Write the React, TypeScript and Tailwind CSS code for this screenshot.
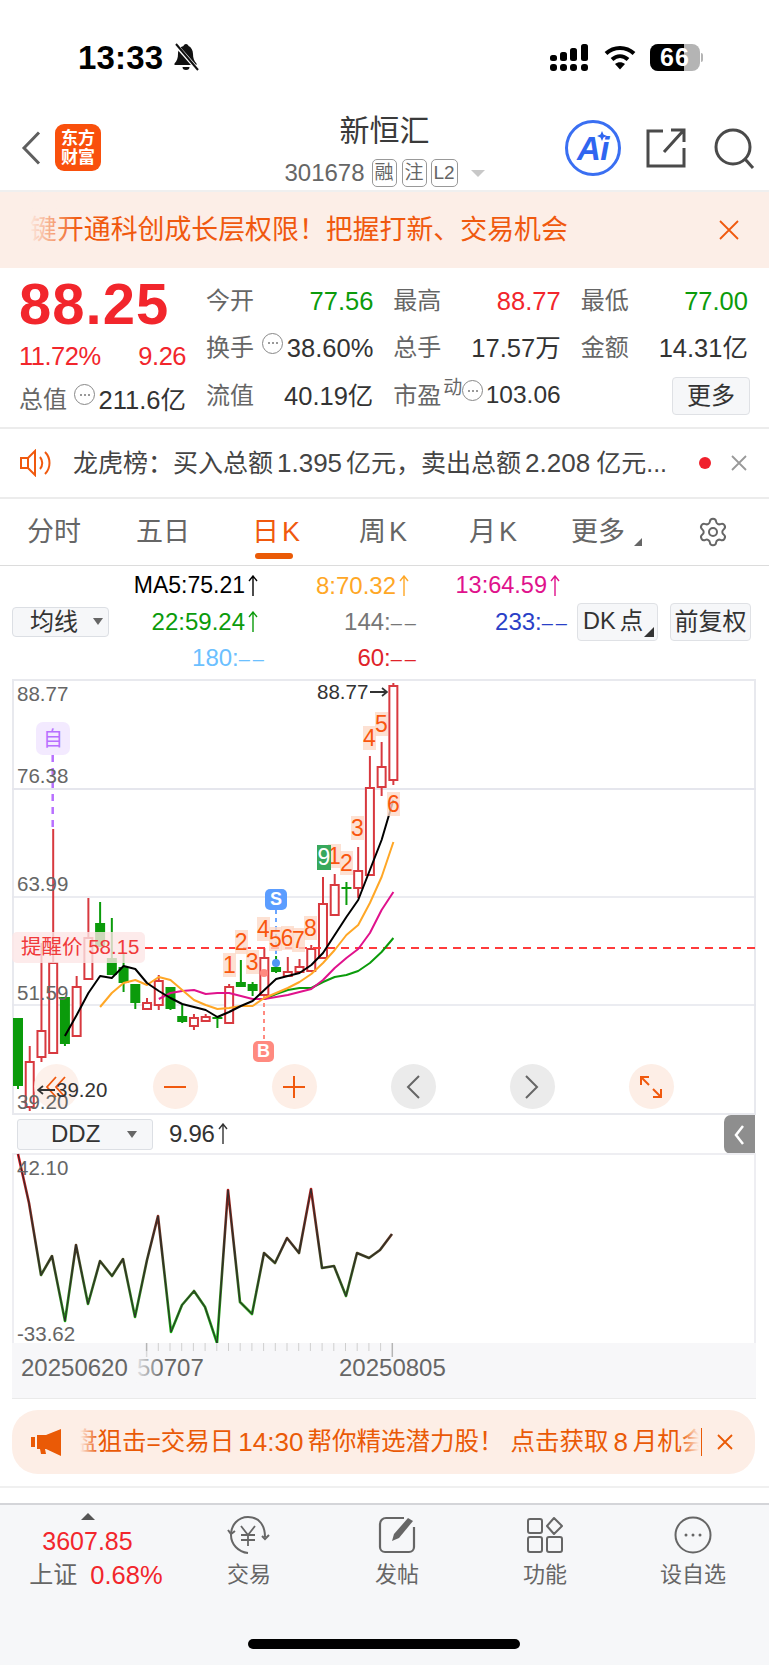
import { Settings } from 'lucide-react';

const RED = '#f2262c';
const GREEN = '#0b9b0b';

// [high, bodyTop, bodyBottom, low, colour]
const candles: [number, number, number, number, 'r' | 'g'][] = [
  [1018, 1018, 1086, 1089, 'g'],
  [1046, 1062, 1107, 1111, 'r'],
  [943, 1031, 1057, 1062, 'r'],
  [829, 963, 1053, 1053, 'r'],
  [997, 997, 1044, 1046, 'g'],
  [976, 987, 1036, 1036, 'r'],
  [898, 938, 979, 979, 'r'],
  [902, 923, 947, 947, 'g'],
  [918, 958, 975, 975, 'g'],
  [952, 967, 983, 992, 'g'],
  [984, 984, 1003, 1009, 'g'],
  [998, 1003, 1009, 1009, 'r'],
  [975, 981, 1005, 1010, 'r'],
  [987, 987, 1009, 1010, 'g'],
  [1005, 1016, 1022, 1023, 'g'],
  [1014, 1018, 1026, 1030, 'r'],
  [1014, 1017, 1021, 1022, 'r'],
  [1017, 1017, 1019, 1028, 'g'],
  [984, 987, 1023, 1023, 'r'],
  [960, 982, 987, 987, 'g'],
  [982, 984, 991, 996, 'g'],
  [948, 958, 995, 995, 'r'],
  [956, 967, 972, 973, 'g'],
  [957, 972, 976, 976, 'r'],
  [959, 967, 972, 972, 'r'],
  [945, 949, 971, 971, 'r'],
  [877, 904, 958, 958, 'r'],
  [874, 885, 915, 915, 'r'],
  [882, 887, 889, 905, 'g'],
  [847, 871, 888, 898, 'r'],
  [756, 788, 875, 875, 'r'],
  [742, 767, 787, 796, 'r'],
  [683, 686, 780, 785, 'r'],
];

const cx = (i: number) => 18 + i * 11.73;

const ma5 = [1036, 1015, 993, 976, 978, 966, 969, 983, 991, 998, 1004, 1007, 1010, 1017, 1012, 1006, 1001, 990, 979, 976, 973, 965, 953, 935, 917, 900, 870, 840, 800];
const ma8 = [1007, 993, 983, 980, 985, 977, 980, 990, 1000, 1005, 1009, 1008, 1006, 1006, 998, 993, 988, 982, 974, 963, 950, 935, 925, 903, 877, 842];
const ma13 = [999, 993, 991, 990, 994, 993, 993, 996, 999, 999, 997, 995, 992, 989, 980, 968, 958, 949, 933, 910, 892];
const ma22 = [999, 994, 990, 988, 988, 982, 977, 975, 971, 963, 952, 938];

const line = (ys: number[], start: number) => ys.map((y, i) => `${cx(start + i).toFixed(1)},${y}`).join(' ');

const tdMarks: [string, number, number][] = [
  ['1', 230, 965],
  ['2', 241.7, 942],
  ['3', 252.7, 962],
  ['4', 264, 929],
  ['5', 276, 939],
  ['6', 287.7, 938],
  ['7', 299, 940],
  ['8', 311, 928],
  ['1', 335, 856],
  ['2', 347, 863],
  ['3', 358, 828],
  ['4', 370, 738],
  ['5', 382, 724],
  ['6', 394, 804],
];

const ddz = [
  [18, 1154], [29, 1203], [41, 1275], [52, 1256], [65, 1321], [76, 1245], [88, 1304], [100, 1261], [112, 1276], [123, 1259],
  [135, 1317], [147, 1260], [158, 1216], [171, 1332], [182, 1305], [194, 1291], [205, 1307], [217, 1343], [228, 1190], [240, 1302],
  [252, 1314], [264, 1253], [275, 1263], [287, 1238], [299, 1253], [311, 1189], [322, 1268], [334, 1266], [346, 1296], [357, 1253],
  [369, 1258], [380, 1250], [392, 1234],
];

function UpArrow({ color }: { color: string }) {
  return (
    <svg width="10" height="22" viewBox="0 0 10 22" fill="none" stroke={color} strokeWidth="1.4" className="ml-[3px] shrink-0">
      <path d="M5 1v20M1 6l4-5 4 5" />
    </svg>
  );
}

function Dots() {
  return (
    <span className="inline-flex w-[21px] h-[21px] rounded-full border border-[#888] items-center justify-center gap-[2px] shrink-0">
      <i className="w-[2px] h-[2px] rounded-full bg-[#777]" />
      <i className="w-[2px] h-[2px] rounded-full bg-[#777]" />
      <i className="w-[2px] h-[2px] rounded-full bg-[#777]" />
    </span>
  );
}

function Stat({ label, value, color, dots }: { label: string; value: string; color: string; dots?: boolean }) {
  return (
    <div className="h-[47.500px] flex items-center justify-between">
      <div className="flex items-center">
        <span className="text-[24px] text-[#666]">{label}</span>
        {dots && (
          <span className="ml-[8px] mb-[10px] flex">
            <Dots />
          </span>
        )}
      </div>
      <span className="text-[25.500px]" style={{ color }}>
        {value}
      </span>
    </div>
  );
}

function StatusBar() {
  return (
    <div className="h-[112px] pt-[43px] pl-[78px] pr-[66px] flex items-start justify-between">
      <div className="flex items-center h-[28px]">
        <span className="text-[33px] font-semibold text-black leading-none tracking-[0.2px]">13:33</span>
        <svg width="27" height="28" viewBox="0 0 27 28" className="ml-[10px]">
          <path d="M13 1c-1.500 0-2.300 1-2.500 2-3.500 1-5.500 4-5.500 8 0 4-1 7-3.500 9.500v1.500h22V20.500C21 18 20 15 20 11c0-4-2-7-4.500-8C15.300 2 14.500 1 13 1z" fill="#111" />
          <path d="M9.500 24a3.500 3 0 0 0 7 0z" fill="#111" />
          <path d="M2 1l23 26" stroke="#fff" strokeWidth="4" />
          <path d="M3 1l22 26" stroke="#111" strokeWidth="2" />
        </svg>
      </div>
      <div className="flex items-center h-[28px]">
        <svg width="38" height="27" viewBox="0 0 38 27" fill="#000">
          <rect x="0" y="11" width="7" height="6" rx="2.500" />
          <rect x="10" y="8" width="7" height="9" rx="2.500" />
          <rect x="20" y="4" width="7" height="13" rx="2.500" />
          <rect x="31" y="0" width="7" height="17" rx="2.500" />
          <rect x="0" y="20" width="7" height="7" rx="3" />
          <rect x="10" y="20" width="7" height="7" rx="3" />
          <rect x="20" y="20" width="7" height="7" rx="3" />
          <rect x="31" y="20" width="7" height="7" rx="3" />
        </svg>
        <svg width="32" height="26" viewBox="0 0 32 26" fill="none" stroke="#000" className="ml-[16px]">
          <path d="M2 9.500c8-7.500 20-7.500 28 0" strokeWidth="4" />
          <path d="M8 15.500c5-4.500 11-4.500 16 0" strokeWidth="4" />
          <path d="M16 25.500l-5-5.500c3-2.500 7-2.500 10 0z" fill="#000" stroke="none" />
        </svg>
        <div className="ml-[14px] flex items-center">
          <div className="relative w-[50px] h-[27px] rounded-[8px] bg-[#b4b4b4] overflow-hidden flex items-center justify-center">
            <div className="absolute left-0 top-0 bottom-0 w-[34px] bg-black" />
            <span className="relative text-[25px] font-bold text-white leading-none tracking-[1px]">66</span>
          </div>
          <div className="ml-[1px] w-[2px] h-[9px] rounded-r-full bg-[#b4b4b4]" />
        </div>
      </div>
    </div>
  );
}

function Header() {
  return (
    <div className="h-[78px] grid grid-cols-[1fr_auto_1fr] items-center">
      <div className="flex items-center pl-[21px] pb-[7px]">
        <svg width="20" height="34" viewBox="0 0 20 34" fill="none" stroke="#5f5f5f" strokeWidth="3">
          <path d="M18 1.500L3 17l15 15.500" />
        </svg>
        <div className="ml-[14px] w-[46px] h-[47px] rounded-[9px] bg-[#f9500c] flex flex-col items-center justify-center text-white font-bold text-[17px] leading-[19px]">
          <span>东方</span>
          <span>财富</span>
        </div>
      </div>
      <div className="flex flex-col items-center self-start pt-[3px]">
        <span className="text-[30px] leading-[32px] text-[#3a3a3a]">新恒汇</span>
        <div className="flex items-center mt-[12px] h-[28px]">
          <span className="text-[24px] text-[#666] mr-[7px]">301678</span>
          <span className="w-[25px] h-[28px] rounded-[5px] border border-[#999] text-[#666] text-[19px] flex items-center justify-center">融</span>
          <span className="ml-[5px] w-[25px] h-[28px] rounded-[5px] border border-[#999] text-[#666] text-[19px] flex items-center justify-center">注</span>
          <span className="ml-[4px] w-[27px] h-[28px] rounded-[5px] border border-[#999] text-[#666] text-[19px] flex items-center justify-center">L2</span>
          <span className="ml-[13px] w-0 h-0 border-x-[7px] border-x-transparent border-t-[7px] border-t-[#c8c8c8]" />
        </div>
      </div>
      <div className="flex items-center justify-end pr-[14px] pb-[6px]">
        <div className="relative w-[56px] h-[56px] rounded-full border-[3px] border-[#3a6ff2] flex items-center justify-center">
          <span className="text-[33px] font-bold italic text-[#2f66f0] leading-none tracking-[-0.5px]">Ai</span>
          <svg width="10" height="10" viewBox="0 0 10 10" className="absolute right-[11px] top-[8px]">
            <path d="M5 0l1.500 3.500L10 5 6.500 6.500 5 10 3.500 6.500 0 5l3.500-1.500z" fill="#2f66f0" />
          </svg>
        </div>
        <svg width="40" height="40" viewBox="0 0 40 40" fill="none" stroke="#4a4a4a" strokeWidth="3" className="ml-[25px]">
          <path d="M17 3H2v35h36V20" />
          <path d="M18 24L37 3M25 2h13v12" />
        </svg>
        <svg width="41" height="41" viewBox="0 0 41 41" fill="none" stroke="#4a4a4a" strokeWidth="3" className="ml-[28px]">
          <circle cx="19" cy="19" r="17" />
          <path d="M31 31l8 9" />
        </svg>
      </div>
    </div>
  );
}

function TopBanner() {
  return (
    <div className="h-[78px] bg-[#fceee7] border-t-2 border-[#efefef] flex items-center relative">
      <span className="ml-[30px] text-[26.900px] leading-none text-[#f0590e] whitespace-nowrap">键开通科创成长层权限！把握打新、交易机会</span>
      <div className="absolute left-[28px] top-0 bottom-0 w-[50px] bg-linear-to-r from-[#fceee7] to-transparent" />
      <svg width="20" height="20" viewBox="0 0 20 20" fill="none" stroke="#f0590e" strokeWidth="1.800" className="ml-auto mr-[30px]">
        <path d="M1 1l18 18M19 1L1 19" />
      </svg>
    </div>
  );
}

function Quote() {
  return (
    <div className="h-[150px] flex pt-[9px] pl-[19px] border-b-2 border-[#ececec] box-content">
      <div className="w-[187px]">
        <div className="h-[53px] flex items-center">
          <span className="text-[58px] font-bold leading-none tracking-[1px]" style={{ color: RED }}>88.25</span>
        </div>
        <div className="h-[46px] pt-[11px] flex justify-between pr-[20px] text-[25.500px] leading-[30px] tracking-[-0.5px]" style={{ color: RED }}>
          <span>11.72%</span>
          <span>9.26</span>
        </div>
        <div className="h-[47.500px] flex items-center justify-between pr-[20px]">
          <div className="flex items-center">
            <span className="text-[24px] text-[#666]">总值</span>
            <span className="ml-[7px] mb-[10px] flex">
              <Dots />
            </span>
          </div>
          <span className="text-[25.500px] text-[#333]">211.6亿</span>
        </div>
      </div>
      <div className="w-[542px] grid grid-cols-3 gap-x-[20px] content-start">
        <Stat label="今开" value="77.56" color={GREEN} />
        <Stat label="最高" value="88.77" color={RED} />
        <Stat label="最低" value="77.00" color={GREEN} />
        <Stat label="换手" value="38.60%" color="#333" dots />
        <Stat label="总手" value="17.57万" color="#333" />
        <Stat label="金额" value="14.31亿" color="#333" />
        <Stat label="流值" value="40.19亿" color="#333" />
        <div className="h-[47.500px] flex items-center justify-between whitespace-nowrap">
          <div className="flex items-center shrink-0">
            <span className="text-[24px] text-[#666]">市盈</span>
            <span className="text-[19px] text-[#666] mb-[16px] ml-[2px]">动</span>
            <span className="mb-[10px] flex">
              <Dots />
            </span>
          </div>
          <span className="text-[24.500px] text-[#333]">103.06</span>
        </div>
        <div className="h-[47.500px] flex items-center justify-end">
          <span className="w-[78px] h-[38px] -mr-[2px] rounded-[4px] bg-[#f6f7f9] border border-[#dfe1e5] flex items-center justify-center text-[24px] text-[#333]">更多</span>
        </div>
      </div>
    </div>
  );
}

function Notice() {
  return (
    <div className="h-[68px] flex items-center pl-[20px] border-b-2 border-[#ececec] box-content">
      <svg width="32" height="28" viewBox="0 0 32 28" fill="none" stroke="#f0590e" strokeWidth="2">
        <path d="M8 9H1v10h7l7 7V2z" />
        <path d="M8 9v10" />
        <path d="M20 8c3 3.500 3 8.500 0 12" />
        <path d="M25 3c6 6 6 16 0 22" />
      </svg>
      <span className="ml-[21px] text-[25px] leading-none text-[#444] whitespace-nowrap flex items-center">
        龙虎榜：买入总额<span className="mx-[4px] text-[26px]">1.395</span>亿元，卖出总额<span className="mx-[4px] text-[26px]">2.208</span><span className="ml-[2px]">亿元...</span>
      </span>
      <span className="absolute left-[699px] w-[12px] h-[12px] rounded-full bg-[#f0202c]" />
      <svg width="16" height="16" viewBox="0 0 16 16" fill="none" stroke="#999" strokeWidth="1.800" className="absolute left-[731px]">
        <path d="M1 1l14 14M15 1L1 15" />
      </svg>
    </div>
  );
}

function Tabs() {
  return (
    <div className="relative h-[66px] border-b border-[#dcdcdc] box-content flex items-center text-[27px] text-[#666]">
      <span className="ml-[27px]">分时</span>
      <span className="ml-[55px]">五日</span>
      <span className="ml-[62px] text-[#f0590e] relative">
        日<span className="ml-[3px]">K</span>
        <span className="absolute left-[3px] -bottom-[7px] w-[38px] h-[6px] rounded-full bg-[#ea5a06]" />
      </span>
      <span className="ml-[59px]">周<span className="ml-[3px]">K</span></span>
      <span className="ml-[62px]">月<span className="ml-[3px]">K</span></span>
      <span className="ml-[54px]">更多</span>
      <span className="ml-[9px] mt-[20px] w-0 h-0 border-l-[8px] border-l-transparent border-b-[8px] border-b-[#666]" />
      <Settings className="ml-[55px]" size={32} strokeWidth={1.5} color="#666" />
    </div>
  );
}

function Caret({ className }: { className: string }) {
  return <span className={`w-0 h-0 border-x-[5px] border-x-transparent border-t-[7px] border-t-[#666] ${className}`} />;
}

function Dash() {
  return <span className="text-[20px] tracking-[3px] -mr-[3px]">––</span>;
}

function MaRows() {
  return (
    <div className="h-[113px] text-[24px] leading-none">
      <div className="h-[37px] pt-[2px] flex items-center">
        <span className="w-[258px] flex justify-end items-center text-black text-[23px]">MA5:75.21<UpArrow color="#000" /></span>
        <span className="w-[151px] flex justify-end items-center text-[#ffa726]">8:70.32<UpArrow color="#ffa726" /></span>
        <span className="w-[151px] flex justify-end items-center text-[#e0128c] text-[23.500px]">13:64.59<UpArrow color="#e0128c" /></span>
      </div>
      <div className="h-[37px] flex items-center">
        <div className="w-[258px] flex items-center justify-between">
          <div className="ml-[12px] w-[97px] h-[30px] rounded-[4px] bg-[#f6f7f9] border border-[#dcdfe4] flex items-center pl-[17px] text-[#333]">
            <span>均线</span>
            <Caret className="ml-[15px]" />
          </div>
          <span className="flex items-center" style={{ color: GREEN }}>22:59.24<UpArrow color={GREEN} /></span>
        </div>
        <span className="w-[158px] text-right text-[#777]">144:<Dash /></span>
        <span className="w-[151px] text-right text-[#2a3fc7]">233:<Dash /></span>
        <div className="relative ml-[10px] w-[81px] h-[38px] rounded-[4px] bg-[#f6f7f9] border border-[#dfe1e5] flex items-center pl-[5px] text-[#333] whitespace-nowrap text-[23.500px]">
          DK<span className="ml-[4px]">点</span>
          <span className="absolute right-[3px] bottom-[3px] w-0 h-0 border-l-[10px] border-l-transparent border-b-[10px] border-b-[#333]" />
        </div>
        <div className="ml-[12px] w-[81px] h-[38px] rounded-[4px] bg-[#f6f7f9] border border-[#dfe1e5] flex items-center justify-center text-[#333] whitespace-nowrap">前复权</div>
      </div>
      <div className="h-[35px] flex items-center">
        <span className="w-[264px] text-right text-[#6cc0ff]">180:<Dash /></span>
        <span className="w-[152px] text-right text-[#e0232a]">60:<Dash /></span>
      </div>
    </div>
  );
}

function RoundButton({ bg, children }: { bg: string; children: React.ReactNode }) {
  return (
    <div className={`w-[45px] h-[45px] rounded-full flex items-center justify-center ${bg}`}>{children}</div>
  );
}

function MainChart() {
  return (
    <div className="relative mx-[12px] h-[436px] w-[744px] border-2 border-[#e8e9ee] box-border">
      <svg className="absolute -left-[2px] -top-[2px]" width="744" height="436" viewBox="12 679 744 436" fill="none">
        <path d="M12 789H756" stroke="#e5e6ed" strokeWidth="2" />
        <path d="M12 897H756M12 1005H756" stroke="#e5e6ed" strokeWidth="1.500" />
        <path d="M52.700 755V829" stroke="#b870ff" strokeWidth="2.500" strokeDasharray="7 6" />
        <path d="M276 910V960" stroke="#6ba6ff" strokeWidth="2" strokeDasharray="4 4" />
        <path d="M264 995V1041" stroke="#ff8a80" strokeWidth="2" strokeDasharray="4 4" />
        {candles.map(([h, t, b, l, c], i) => {
          const color = c === 'r' ? '#d8393f' : GREEN;
          return (
            <g key={i}>
              <path d={`M${cx(i)} ${h}V${l}`} stroke={color} strokeWidth="2" />
              {c === 'r' ? (
                <rect x={cx(i) - 4} y={t} width="8" height={b - t} fill="#fff" stroke={color} strokeWidth="2" />
              ) : (
                <rect x={cx(i) - 5} y={t} width="10" height={b - t} fill={color} />
              )}
            </g>
          );
        })}
        <path d="M145 948H756" stroke="#ff3b3b" strokeWidth="2" strokeDasharray="8 6" />
        <polyline points={line(ma22, 21)} stroke={GREEN} strokeWidth="2" strokeLinejoin="round" />
        <polyline points={line(ma13, 12)} stroke="#e0128c" strokeWidth="2" strokeLinejoin="round" />
        <polyline points={line(ma8, 7)} stroke="#ffa726" strokeWidth="2" strokeLinejoin="round" />
        <polyline points={line(ma5, 4)} stroke="#000" strokeWidth="2" strokeLinejoin="round" />
        <circle cx="276" cy="963" r="4" fill="#4f97f5" />
        <circle cx="264" cy="973" r="4" fill="#ff8a80" />
      </svg>

      <div className="absolute left-[19.500px] top-[383px] w-[640px] flex justify-between">
        <RoundButton bg="bg-[#fdeee6]/80">
          <svg width="20" height="22" viewBox="0 0 20 22" fill="none" stroke="#f0590e" strokeWidth="1.800"><path d="M10 1L1 11l9 10M19 1l-9 10 9 10" /></svg>
        </RoundButton>
        <RoundButton bg="bg-[#fdeee6]">
          <svg width="24" height="24" viewBox="0 0 24 24" fill="none" stroke="#f0590e" strokeWidth="2"><path d="M1 12h22" /></svg>
        </RoundButton>
        <RoundButton bg="bg-[#fdeee6]">
          <svg width="24" height="24" viewBox="0 0 24 24" fill="none" stroke="#f0590e" strokeWidth="2"><path d="M1 12h22M12 1v22" /></svg>
        </RoundButton>
        <RoundButton bg="bg-[#ebebeb]">
          <svg width="14" height="24" viewBox="0 0 14 24" fill="none" stroke="#666" strokeWidth="2"><path d="M13 1L2 12l11 11" /></svg>
        </RoundButton>
        <RoundButton bg="bg-[#ebebeb]">
          <svg width="14" height="24" viewBox="0 0 14 24" fill="none" stroke="#666" strokeWidth="2"><path d="M1 1l11 11L1 23" /></svg>
        </RoundButton>
        <RoundButton bg="bg-[#fdeee6]">
          <svg width="24" height="24" viewBox="0 0 24 24" fill="none" stroke="#f0590e" strokeWidth="2"><path d="M2 10V2h8M2 2l8 8M22 14v8h-8M22 22l-8-8" /></svg>
        </RoundButton>
      </div>

      <span className="absolute left-[3px] top-[1px] text-[20.500px] leading-[24px] text-[#666]">88.77</span>
      <span className="absolute left-[3px] top-[83px] text-[20.500px] leading-[24px] text-[#666]">76.38</span>
      <span className="absolute left-[3px] top-[191px] text-[20.500px] leading-[24px] text-[#666]">63.99</span>
      <span className="absolute left-[3px] top-[300px] text-[20.500px] leading-[24px] text-[#666]">51.59</span>
      <span className="absolute left-[3px] top-[409px] text-[20.500px] leading-[24px] text-[#666]">39.20</span>

      <span className="absolute left-[303px] -top-[1px] flex items-center text-[20.500px] leading-[24px] text-[#333]">
        88.77
        <svg width="18" height="10" viewBox="0 0 18 10" fill="none" stroke="#333" strokeWidth="1.800" className="ml-[2px]">
          <path d="M0 5h16M12 1l5 4-5 4" />
        </svg>
      </span>
      <span className="absolute left-[23px] top-[397px] flex items-center text-[20.500px] leading-[24px] text-[#333]">
        <svg width="18" height="10" viewBox="0 0 18 10" fill="none" stroke="#333" strokeWidth="1.800" className="mr-[1px]">
          <path d="M18 5H2M6 1L1 5l5 4" />
        </svg>
        39.20
      </span>

      <span className="absolute left-[22px] top-[41px] w-[34px] h-[33px] rounded-[7px] bg-[#f3eaff] flex items-center justify-center text-[20px] text-[#b870ff]">自</span>
      <div className="absolute -left-[2px] top-[251px] w-[133px] h-[31px] rounded-[5px] bg-[#fde6e6]/80 flex items-center pl-[9px] text-[20.500px] text-[#f03a3a] whitespace-nowrap">
        提醒价 58.15
      </div>

      {tdMarks.map(([n, x, y], i) => (
        <span
          key={i}
          className="absolute w-[13px] h-[24px] bg-[#fdd9c8]/80 flex items-center justify-center text-[23px] leading-none text-[#f9560e]"
          style={{ left: x - 7 - 14, top: y - 12 - 681 }}
        >
          {n}
        </span>
      ))}
      <span className="absolute left-[303px] top-[164px] w-[14px] h-[25px] bg-[#38a85c] flex items-center justify-center text-[23px] leading-none text-white">9</span>

      <span className="absolute left-[251px] top-[208px] w-[22px] h-[21px] rounded-[5px] bg-[#5b9dff] flex items-center justify-center text-[18px] font-bold text-white">S</span>
      <span className="absolute left-[239px] top-[360px] w-[21px] h-[21px] rounded-[5px] bg-[#ff8a80] flex items-center justify-center text-[18px] font-bold text-white">B</span>
    </div>
  );
}

function SubChart() {
  return (
    <>
      <div className="relative h-[38px] flex items-center">
        <div className="ml-[17px] w-[136px] h-[31px] rounded-[3px] bg-[#f6f7f9] border border-[#dcdfe4] flex items-center text-[24px] text-[#333]">
          <span className="ml-[33px]">DDZ</span>
          <Caret className="ml-[27px]" />
        </div>
        <span className="ml-[16px] flex items-center text-[24px] text-[#333] tracking-[-0.3px]">9.96<UpArrow color="#333" /></span>
        <div className="absolute left-[724px] top-0 w-[31px] h-[39px] rounded-l-[7px] bg-[#8e8e8e] flex items-center justify-center">
          <svg width="11" height="22" viewBox="0 0 11 22" fill="none" stroke="#fff" strokeWidth="2.500"><path d="M9 2L2 11l7 9" /></svg>
        </div>
      </div>
      <div className="relative mx-[12px] w-[744px] h-[190px] border-x-2 border-t-2 border-[#eeeef2] box-border">
        <svg className="absolute -left-[2px] -top-[2px]" width="744" height="190" viewBox="12 1153 744 190" fill="none">
          <defs>
            <linearGradient id="ddzEdge" gradientUnits="userSpaceOnUse" x1="0" y1="1153" x2="0" y2="1343">
              <stop offset="0" stopColor="#e8101c" />
              <stop offset="0.5" stopColor="#4a3a20" />
              <stop offset="1" stopColor="#10c010" />
            </linearGradient>
          </defs>
          <polyline points={ddz.map((p) => p.join(',')).join(' ')} stroke="url(#ddzEdge)" strokeWidth="2.600" strokeLinejoin="round" />
          <polyline points={ddz.map((p) => p.join(',')).join(' ')} stroke="#2c2c2c" strokeWidth="1" strokeLinejoin="round" />
        </svg>
        <span className="absolute left-[3px] top-[1px] text-[20.500px] leading-[24px] text-[#666]">42.10</span>
        <span className="absolute left-[3px] top-[167px] text-[20.500px] leading-[24px] text-[#666]">-33.62</span>
      </div>
      <div className="relative mx-[12px] w-[744px] h-[55px] bg-[#f7f7f9] border-b border-[#eaeaea] box-content">
        <svg className="absolute left-0 top-0" width="744" height="16" viewBox="12 1343 744 16" fill="none">
          {Array.from({ length: 22 }, (_, i) => {
            const x = 146.6 + i * 11.7;
            const long = i === 0 || i === 21;
            return <path key={i} d={`M${x} 1343V${long ? 1357 : 1351}`} stroke={long ? '#b5b5b5' : '#cfcfcf'} strokeWidth={long ? 1.500 : 1} />;
          })}
        </svg>
        <span className="absolute left-[9px] top-[11px] text-[24px] leading-[28px] text-[#666]">20250620</span>
        <span className="absolute left-[125px] top-[11px] text-[24px] leading-[28px] text-[#666]">50707</span>
        <div className="absolute left-[121px] top-[8px] h-[34px] w-[30px] bg-linear-to-r from-[#f7f7f9] to-transparent" />
        <span className="absolute left-[327px] top-[11px] text-[24px] leading-[28px] text-[#666]">20250805</span>
      </div>
    </>
  );
}

function AdBanner() {
  return (
    <div className="h-[76px] pt-[11px] border-b-2 border-[#f0f0f0] box-content">
      <div className="relative mx-[12px] w-[743px] h-[64px] rounded-[26px] bg-[#fdeee6] flex items-center">
        <svg width="31" height="27" viewBox="0 0 31 27" fill="#ea5a06" className="ml-[19px] shrink-0">
          <path d="M0 8h4v10H0zM6 6h9L30 0v27L15 20h-1l1 5h-5l-1-5H6z" />
        </svg>
        <div className="relative ml-[18px] w-[619px] h-[30px] overflow-hidden whitespace-nowrap text-[24.500px] leading-none text-[#ea5a06]">
          <div className="flex items-center h-full -ml-[7px]">
            盘狙击=交易日<span className="mx-[4px] text-[26px]">14:30</span>帮你精选潜力股！<span className="ml-[7px]">点击获取</span><span className="mx-[5px] text-[26px]">8</span>月机会
          </div>
          <div className="absolute left-0 top-0 bottom-0 w-[18px] bg-linear-to-r from-[#fdeee6] to-transparent" />
          <div className="absolute right-0 top-0 bottom-0 w-[18px] bg-linear-to-l from-[#fdeee6] to-transparent" />
        </div>
        <span className="ml-[2px] w-px h-[28px] bg-[#ea5a06]" />
        <svg width="16" height="16" viewBox="0 0 16 16" fill="none" stroke="#ea5a06" strokeWidth="1.800" className="ml-[15px]">
          <path d="M1 1l14 14M15 1L1 15" />
        </svg>
      </div>
    </div>
  );
}

function BottomTab({ label, children }: { label: string; children: React.ReactNode }) {
  return (
    <div className="flex flex-col items-center">
      <div className="h-[38px] flex items-center justify-center">{children}</div>
      <span className="mt-[5px] text-[22px] leading-[32px] text-[#666] whitespace-nowrap">{label}</span>
    </div>
  );
}

function BottomBar() {
  return (
    <div className="relative h-[162px] mt-[15px] bg-[#f6f7f9] border-t-2 border-[#d4d5d9]">
      <div className="flex items-start">
        <div className="w-[175px] flex flex-col items-center pt-[8px]">
          <span className="w-0 h-0 border-x-[7px] border-x-transparent border-b-[7px] border-b-[#555]" />
          <span className="mt-[7px] text-[25px] leading-[28px]" style={{ color: RED }}>3607.85</span>
          <div className="mt-[3px] ml-[17px] flex items-center leading-[34px]">
            <span className="text-[24px] text-[#666]">上证</span>
            <span className="ml-[13px] text-[25.500px]" style={{ color: RED }}>0.68%</span>
          </div>
        </div>
        <div className="grid grid-cols-4 w-[592px] pt-[11px]">
          <BottomTab label="交易">
            <svg width="44" height="40" viewBox="0 0 44 40" fill="none" stroke="#666" strokeWidth="2">
              <path d="M21 2C11 2 4 10 4 20c0 9 7 17 17 18" />
              <path d="M21 2c5 0 10 2 13 6 3 4 4 9 4 14M1 15l3 4 4-3M42 20l-4 4-3-3" />
              <path d="M14 11l7 9 7-9M21 20v11M14 20h14M14 25h14" strokeWidth="1.800" />
            </svg>
          </BottomTab>
          <BottomTab label="发帖">
            <svg width="38" height="38" viewBox="0 0 38 38" fill="none" stroke="#666" strokeWidth="2.200">
              <path d="M26 2H8a6 6 0 0 0-6 6v23a5 5 0 0 0 5 5h24a5 5 0 0 0 5-5V11" />
              <path d="M14 25l2-7L30 2l5 3-14 17z" fill="#666" stroke="none" />
            </svg>
          </BottomTab>
          <BottomTab label="功能">
            <svg width="36" height="36" viewBox="0 0 36 36" fill="none" stroke="#666" strokeWidth="2">
              <rect x="1" y="2" width="14" height="14" rx="2" />
              <rect x="1" y="20" width="14" height="15" rx="2" />
              <rect x="20" y="20" width="15" height="15" rx="2" />
              <path d="M27 1l8 8-8 8-7-8z" strokeLinejoin="round" />
            </svg>
          </BottomTab>
          <BottomTab label="设自选">
            <svg width="38" height="38" viewBox="0 0 38 38" fill="none" stroke="#666" strokeWidth="2">
              <circle cx="19" cy="19" r="17.500" />
              <circle cx="12" cy="19" r="1.500" fill="#666" stroke="none" />
              <circle cx="19" cy="19" r="1.500" fill="#666" stroke="none" />
              <circle cx="26" cy="19" r="1.500" fill="#666" stroke="none" />
            </svg>
          </BottomTab>
        </div>
      </div>
      <div className="absolute left-[248px] bottom-[16px] w-[272px] h-[10px] rounded-full bg-black" />
    </div>
  );
}

export default function App() {
  return (
    <div className="relative w-[769px] h-[1665px] overflow-hidden bg-white font-['Liberation_Sans','Noto_Sans_CJK_SC',sans-serif]">
      <StatusBar />
      <Header />
      <TopBanner />
      <Quote />
      <Notice />
      <Tabs />
      <MaRows />
      <MainChart />
      <SubChart />
      <AdBanner />
      <BottomBar />
    </div>
  );
}
